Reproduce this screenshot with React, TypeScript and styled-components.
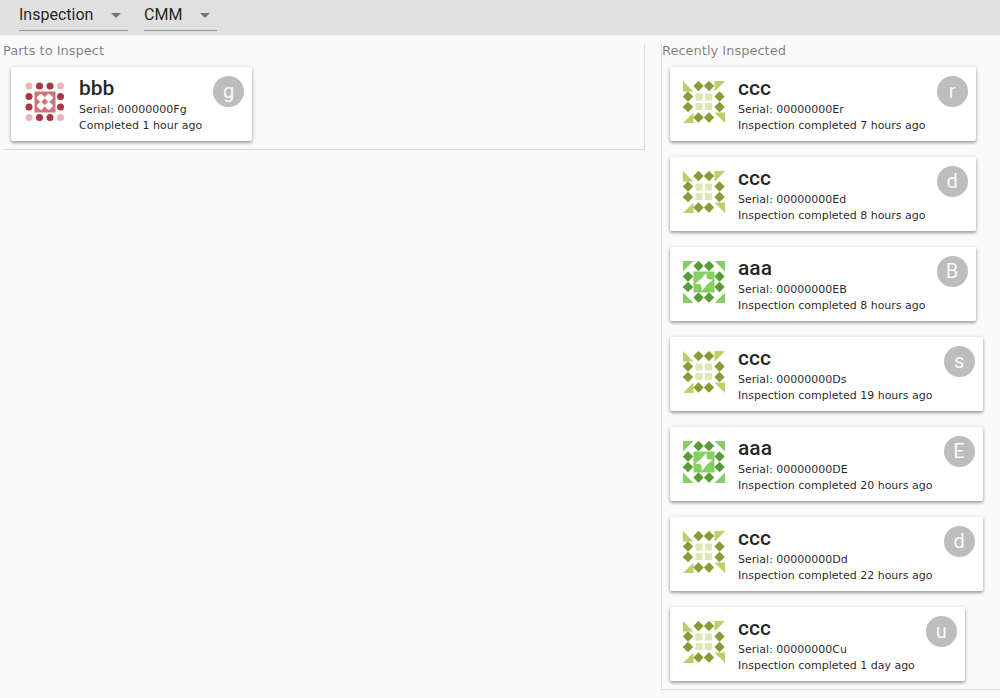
import React from "react";
import styled, { createGlobalStyle } from "styled-components";

const GlobalStyle = createGlobalStyle`
  *, *::before, *::after { box-sizing: border-box; }
  body {
    margin: 0;
    background: #fafafa;
    color: rgba(0, 0, 0, 0.87);
    font-family: "DejaVu Sans", sans-serif;
  }
`;

const Toolbar = styled.nav`
  display: flex;
  gap: 16px;
  min-height: 36px;
  padding: 0 19px 4px;
  background: #e0e0e0;
  border-bottom: 1px solid #ebebeb;
`;

const SelectField = styled.div`
  display: grid;
  align-items: center;
  border-bottom: 1px solid #949494;
`;

const SelectInput = styled.select`
  grid-area: 1 / 1;
  appearance: none;
  border: 0;
  margin: 0;
  padding: 0 34px 0 0;
  background: transparent;
  color: rgba(0, 0, 0, 0.87);
  font: 400 16px/24px Roboto, sans-serif;
`;

const SelectArrow = styled.svg`
  grid-area: 1 / 1;
  justify-self: end;
  width: 24px;
  height: 24px;
  fill: #757575;
  pointer-events: none;
`;

const Main = styled.main`
  display: grid;
  grid-template-columns: minmax(0, 642fr) minmax(0, 339fr);
  align-items: start;
  gap: 16px;
  padding: 8px 0 0 3px;
`;

const Region = styled.section<{ $side: "left" | "right" }>`
  padding-bottom: 8px;
  border-bottom: 1px solid #dadada;
  border-${(p) => p.$side}: 1px solid #dadada;
`;

const RegionTitle = styled.h2`
  margin: 0;
  color: rgba(0, 0, 0, 0.5);
  font-size: 13px;
  font-weight: 400;
  line-height: 14px;
`;

const CardList = styled.ul`
  display: flex;
  flex-direction: column;
  align-items: flex-start;
  gap: 16px;
  margin: 0;
  padding: 9px 8px 0;
  list-style: none;
`;

const Card = styled.li`
  display: flex;
  align-items: flex-start;
  padding: 8px 8px 7px;
  border-radius: 2px;
  background: #fff;
  box-shadow: 0 1px 4px rgba(0, 0, 0, 0.2), 0 2px 3px rgba(0, 0, 0, 0.26);
`;

const Identicon = styled.svg`
  flex: none;
  width: 42px;
  height: 42px;
  margin: 6px 13px 0 5px;
`;

const CardText = styled.div`
  font-size: 11px;
  line-height: 16px;
  white-space: nowrap;
`;

const PartName = styled.h3`
  margin: 0;
  font: 500 21px/27px Roboto, sans-serif;
`;

const Line = styled.p`
  margin: 0;
`;

const Avatar = styled.div`
  display: flex;
  flex: none;
  align-items: center;
  justify-content: center;
  width: 31px;
  height: 31px;
  margin: 1px 0 0 11px;
  border-radius: 50%;
  background: #bdbdbd;
  color: #fafafa;
  font: 400 20px/31px Roboto, sans-serif;
`;

type PartKind = "aaa" | "bbb" | "ccc";

const EDGES = [
  [15.5, 5], [26, 5], [36.5, 15.5], [36.5, 26],
  [26, 36.5], [15.5, 36.5], [5, 26], [5, 15.5],
];

const CORNERS = [[5, 5], [36.5, 5], [5, 36.5], [36.5, 36.5]];

const CENTERS = [[16.8, 16.8], [24.8, 16.8], [16.8, 24.8], [24.8, 24.8]];

function Diamonds({ color }: { color: string }) {
  return (
    <g fill={color}>
      {EDGES.map(([x, y]) => (
        <path key={`${x}-${y}`} d={`M${x} ${y - 5.2}l5.2 5.2l-5.2 5.2l-5.2 -5.2z`} />
      ))}
    </g>
  );
}

function PartIcon({ kind }: { kind: PartKind }) {
  if (kind === "bbb") {
    return (
      <Identicon viewBox="0 0 42 42" aria-hidden="true">
        <g fill="#a93545">
          {EDGES.map(([x, y]) => <circle key={`${x}-${y}`} cx={x} cy={y} r="3.5" />)}
        </g>
        <g fill="#e8b5bb">
          {CORNERS.map(([x, y]) => <circle key={`${x}-${y}`} cx={x} cy={y} r="3.5" />)}
        </g>
        <path fill="#d1727c" d="M10.5 10.5h21v21h-21z" />
        <g fill="#fff">
          {CENTERS.map(([x, y]) => (
            <path
              key={`${x}-${y}`}
              d={`M${x - 0.7} ${y - 3.9}h1.4l3.2 3.2v1.4l-3.2 3.2h-1.4l-3.2 -3.2v-1.4z`}
            />
          ))}
        </g>
      </Identicon>
    );
  }
  if (kind === "aaa") {
    return (
      <Identicon viewBox="0 0 42 42" aria-hidden="true">
        <path fill="#87cf65" d="M0 0h10.5L0 10.5zM31.5 0H42v10.5zM0 31.5L10.5 42H0zM42 31.5V42H31.5z" />
        <Diamonds color="#579c35" />
        <path fill="#87cf65" d="M10.5 10.5h21v21h-21z" />
        <path fill="#fff" d="M23.2 12L24 18l5.8 .8L24 23.5L19 30l-1 -6.5L12.2 22.5L18 18z" />
      </Identicon>
    );
  }
  return (
    <Identicon viewBox="0 0 42 42" aria-hidden="true">
      <path fill="#bacf65" d="M0 0L10.5 10.5H0zM31.5 0H42L31.5 10.5zM10.5 31.5V42H0zM31.5 31.5H42V42z" />
      <Diamonds color="#879c35" />
      <path fill="#dde7b2" d="M12.5 12.5h7v7h-7zM22 12.5h7v7h-7zM12.5 22h7v7h-7zM22 22h7v7h-7z" />
    </Identicon>
  );
}

interface Part {
  kind: PartKind;
  serial: string;
  status: string;
}

const TO_INSPECT: Part[] = [
  { kind: "bbb", serial: "00000000Fg", status: "Completed 1 hour ago" },
];

const INSPECTED: Part[] = [
  { kind: "ccc", serial: "00000000Er", status: "Inspection completed 7 hours ago" },
  { kind: "ccc", serial: "00000000Ed", status: "Inspection completed 8 hours ago" },
  { kind: "aaa", serial: "00000000EB", status: "Inspection completed 8 hours ago" },
  { kind: "ccc", serial: "00000000Ds", status: "Inspection completed 19 hours ago" },
  { kind: "aaa", serial: "00000000DE", status: "Inspection completed 20 hours ago" },
  { kind: "ccc", serial: "00000000Dd", status: "Inspection completed 22 hours ago" },
  { kind: "ccc", serial: "00000000Cu", status: "Inspection completed 1 day ago" },
];

function PartCard({ kind, serial, status }: Part) {
  return (
    <Card>
      <PartIcon kind={kind} />
      <CardText>
        <PartName>{kind}</PartName>
        <Line>Serial: {serial}</Line>
        <Line>{status}</Line>
      </CardText>
      <Avatar>{serial.slice(-1)}</Avatar>
    </Card>
  );
}

function ToolbarSelect({ label, value }: { label: string; value: string }) {
  return (
    <SelectField>
      <SelectInput aria-label={label} defaultValue={value}>
        <option>{value}</option>
      </SelectInput>
      <SelectArrow viewBox="0 0 24 24" aria-hidden="true">
        <path d="M7 10l5 5 5-5z" />
      </SelectArrow>
    </SelectField>
  );
}

export default function App() {
  return (
    <>
      <GlobalStyle />
      <Toolbar>
        <ToolbarSelect label="Station type" value="Inspection" />
        <ToolbarSelect label="Inspection type" value="CMM" />
      </Toolbar>
      <Main>
        <Region $side="right">
          <RegionTitle>Parts to Inspect</RegionTitle>
          <CardList>
            {TO_INSPECT.map((part) => <PartCard key={part.serial} {...part} />)}
          </CardList>
        </Region>
        <Region $side="left">
          <RegionTitle>Recently Inspected</RegionTitle>
          <CardList>
            {INSPECTED.map((part) => <PartCard key={part.serial} {...part} />)}
          </CardList>
        </Region>
      </Main>
    </>
  );
}
